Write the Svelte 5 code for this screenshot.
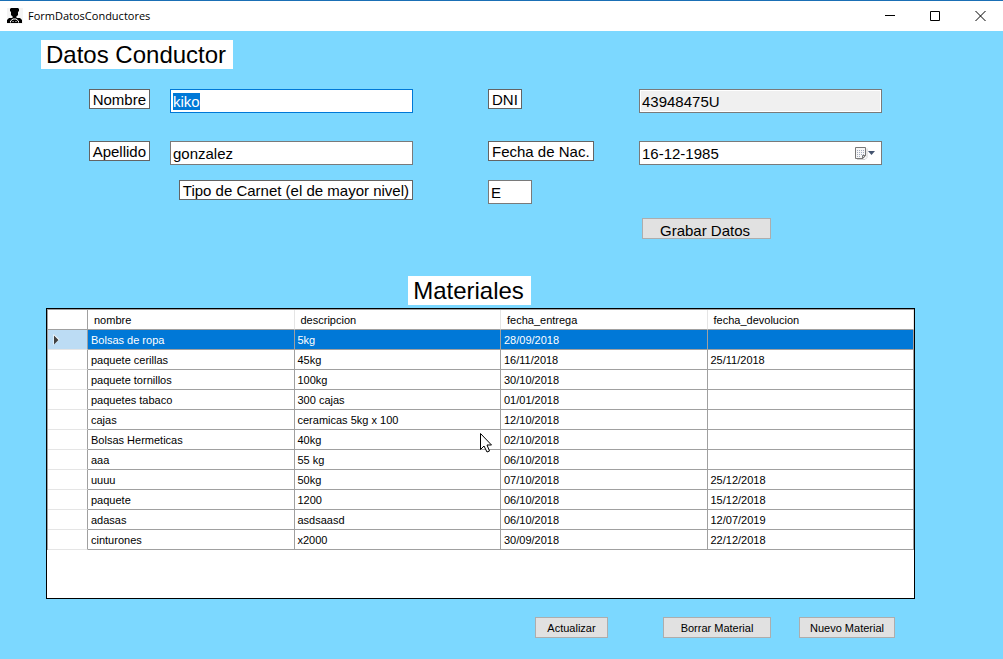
<script>
  import { onMount } from 'svelte';

  let nombreInput;

  let conductor = $state({
    nombre: 'kiko',
    apellido: 'gonzalez',
    dni: '43948475U',
    fecha: '16-12-1985',
    carnet: 'E'
  });

  const columnas = ['nombre', 'descripcion', 'fecha_entrega', 'fecha_devolucion'];

  const materiales = [
    ['Bolsas de ropa', '5kg', '28/09/2018', ''],
    ['paquete cerillas', '45kg', '16/11/2018', '25/11/2018'],
    ['paquete tornillos', '100kg', '30/10/2018', ''],
    ['paquetes tabaco', '300 cajas', '01/01/2018', ''],
    ['cajas', 'ceramicas 5kg x 100', '12/10/2018', ''],
    ['Bolsas Hermeticas', '40kg', '02/10/2018', ''],
    ['aaa', '55 kg', '06/10/2018', ''],
    ['uuuu', '50kg', '07/10/2018', '25/12/2018'],
    ['paquete', '1200', '06/10/2018', '15/12/2018'],
    ['adasas', 'asdsaasd', '06/10/2018', '12/07/2019'],
    ['cinturones', 'x2000', '30/09/2018', '22/12/2018']
  ];

  let seleccion = $state(0);

  onMount(() => {
    nombreInput.focus();
    nombreInput.select();
  });
</script>

<div class="window">
  <header class="titlebar">
    <svg class="app-icon" width="16" height="16" viewBox="0 0 16 16" aria-hidden="true">
      <rect width="16" height="16" fill="#f4f4f4" />
      <path d="M3 1l1-1h7l1 1v2l-1 1v3L9 9H6L4 7V4L3 3z" fill="#000" />
      <path d="M0 15v-3l2-2h3l1-1h3l1 1h3l2 2v3z" fill="#000" />
      <path d="M3.500 14.500v-1.500l2.500-2h3l2.500 2v1.500M5.500 13.500h1M8.500 13.500h1" fill="none" stroke="#fff" />
    </svg>
    <span class="title">FormDatosConductores</span>
    <div class="controls">
      <button type="button" aria-label="Minimizar">
        <svg width="11" height="11" viewBox="0 0 11 11"><path d="M0 4.500h10" stroke="#000" /></svg>
      </button>
      <button type="button" aria-label="Maximizar">
        <svg width="11" height="11" viewBox="0 0 11 11"><path d="M.5.5h9v9h-9z" fill="none" stroke="#000" /></svg>
      </button>
      <button type="button" aria-label="Cerrar">
        <svg width="11" height="11" viewBox="0 0 11 11"><path d="M.5 0l10 10M10.500 0l-10 10" stroke="#000" /></svg>
      </button>
    </div>
  </header>

  <main>
    <h1 class="heading">Datos Conductor</h1>

    <form class="fields" onsubmit={(e) => e.preventDefault()}>
      <label class="tag left r1" for="nombre">Nombre</label>
      <input class="box mid r1" id="nombre" bind:this={nombreInput} bind:value={conductor.nombre} />
      <label class="tag third r1" for="dni">DNI</label>
      <input class="box last r1" id="dni" readonly bind:value={conductor.dni} />

      <label class="tag left r2" for="apellido">Apellido</label>
      <input class="box mid r2" id="apellido" bind:value={conductor.apellido} />
      <label class="tag third r2" for="fecha">Fecha de Nac.</label>
      <div class="date last r2">
        <input id="fecha" bind:value={conductor.fecha} />
        <button type="button" aria-label="Abrir calendario">
          <svg width="21" height="14" viewBox="0 0 21 14">
            <path d="M2 13.500h8l2-2v-9" fill="none" stroke="#d0d0d0" />
            <path d="M.5 1.500h10v8l-2.500 3H.5z" fill="#f7f7f7" stroke="#777" />
            <path d="M2 4.500h7M2 6.500h7M2 8.500h7M2 10.500h4" stroke="#a3adc0" stroke-dasharray="1 1" />
            <path d="M7.500 12.500v-3h3z" fill="#ddd" stroke="#777" />
            <path d="M13 5h7l-3.500 4z" fill="#44546f" />
          </svg>
        </button>
      </div>

      <label class="tag wide r3" for="carnet">Tipo de Carnet (el de mayor nivel)</label>
      <input class="box third short r3" id="carnet" bind:value={conductor.carnet} />

      <button class="btn save last r4" type="submit">Grabar Datos</button>
    </form>

    <section class="materials">
      <div class="caption"><h2 class="heading" id="materiales">Materiales</h2></div>
      <div class="grid">
        <table aria-labelledby="materiales">
          <thead>
            <tr>
              <th class="rowhead"></th>
              {#each columnas as columna}
                <th>{columna}</th>
              {/each}
            </tr>
          </thead>
          <tbody>
            {#each materiales as fila, i}
              <tr class:selected={i === seleccion} onclick={() => (seleccion = i)}>
                <td class="rowhead">
                  {#if i === seleccion}
                    <svg width="8" height="13" viewBox="0 0 8 13" aria-hidden="true">
                      <path d="M1.500 1v11L7.500 6.500z" fill="#fff" />
                      <path d="M2 2.500v9L6.500 7z" fill="#404040" />
                    </svg>
                  {/if}
                </td>
                {#each fila as valor}
                  <td>{valor}</td>
                {/each}
              </tr>
            {/each}
          </tbody>
        </table>
      </div>
    </section>

    <div class="actions">
      <button class="btn refresh" type="button">Actualizar</button>
      <button class="btn remove" type="button">Borrar Material</button>
      <button class="btn add" type="button">Nuevo Material</button>
    </div>
  </main>

  <svg class="pointer" width="13" height="20" viewBox="0 0 13 20" aria-hidden="true">
    <path d="M.5.5v16l3.500-3.500 3 6 2.500-1-2.500-6h4.500z" fill="#fff" stroke="#000" />
  </svg>
</div>

<style>
  :global(body) {
    margin: 0;
    background: #7cd8ff;
  }

  .window {
    position: relative;
    box-sizing: border-box;
    min-height: 100vh;
    background: #7cd8ff;
    color: #000;
    font: 11px/14px 'Liberation Sans', Arial, sans-serif;
  }

  input,
  button {
    box-sizing: border-box;
    margin: 0;
    border-radius: 0;
    color: inherit;
    font: inherit;
  }

  .titlebar {
    display: flex;
    align-items: center;
    box-sizing: border-box;
    height: 31px;
    padding-left: 7px;
    border-top: 1px solid #1a6fb5;
    background: #fff;
  }

  .title {
    margin-left: 5px;
    font: 11px/16px 'Open Sans', 'Noto Sans', sans-serif;
  }

  .controls {
    display: flex;
    align-self: stretch;
    margin-left: auto;
  }

  .controls button {
    display: flex;
    align-items: center;
    justify-content: center;
    width: 45px;
    padding: 0;
    border: 0;
    background: none;
  }

  main {
    padding: 9px 88px 20px 41px;
  }

  .heading {
    width: max-content;
    margin: 0;
    padding: 1px 7px 0 5px;
    background: #fff;
    font-size: 24px;
    font-weight: 400;
    line-height: 28px;
  }

  .fields {
    display: grid;
    grid-template-columns: 109px 20px minmax(0, 1fr) 75px 106px 45px minmax(0, 1fr);
    grid-template-rows: 52px 39px 38px 21px;
    align-items: start;
    margin-top: 20px;
    padding-right: 33px;
    font-size: 15px;
    line-height: 18px;
  }

  .r1 { grid-row: 1; }
  .r2 { grid-row: 2; }
  .r3 { grid-row: 3; }
  .r4 { grid-row: 4; }

  .left {
    grid-column: 1;
    justify-self: end;
  }

  .mid { grid-column: 3; }

  .wide {
    grid-column: 1 / 4;
    justify-self: end;
  }

  .third {
    grid-column: 5;
    justify-self: start;
  }

  .last { grid-column: 7; }

  .tag {
    padding: 1px 3px 0;
    border: 1px solid #646464;
    background: #fff;
    line-height: 17px;
    white-space: nowrap;
  }

  .box,
  .date {
    box-sizing: border-box;
    height: 24px;
    border: 1px solid #7a7a7a;
    background: #fff;
  }

  .box {
    width: 100%;
    padding: 0 2px;
    outline: none;
  }

  .box:focus {
    border-color: #0078d7;
  }

  .box::selection {
    background: #0078d7;
    color: #fff;
  }

  .box:read-only {
    background: #f0f0f0;
    box-shadow: inset 0 0 0 1px #fff;
  }

  .box.short {
    width: 44px;
  }

  .date {
    display: flex;
  }

  .date input {
    flex: 1;
    min-width: 0;
    padding: 1px 2px 0;
    border: 0;
    outline: none;
    background: none;
  }

  .date button {
    display: flex;
    align-items: center;
    padding: 0 5px 0 0;
    border: 0;
    background: none;
  }

  .btn {
    height: 21px;
    padding: 0;
    border: 1px solid #adadad;
    background: #e1e1e1;
  }

  .save {
    width: 129px;
    margin-left: 3px;
    padding-top: 4px;
    padding-right: 3px;
    line-height: 16px;
  }

  .materials {
    margin-top: 37px;
    padding-left: 5px;
  }

  .caption {
    display: flex;
    justify-content: center;
    margin-bottom: 3px;
    padding-right: 22px;
  }

  .grid {
    box-sizing: border-box;
    min-height: 291px;
    border: 1px solid #000;
    background: #fff;
  }

  table {
    width: 100%;
    border-collapse: separate;
    border-spacing: 0;
    border-top: 1px solid #a0a0a0;
    border-left: 1px solid #a0a0a0;
    table-layout: fixed;
  }

  th,
  td {
    box-sizing: border-box;
    height: 20px;
    padding: 0 3px;
    border-right: 1px solid #a0a0a0;
    border-bottom: 1px solid #a0a0a0;
    text-align: left;
    font-weight: 400;
    white-space: nowrap;
  }

  th {
    padding: 0 6px;
    border-right-color: #e5e5e5;
  }

  .rowhead {
    width: 40px;
    padding: 0 4px;
    border-right-color: #a0a0a0;
  }

  td.rowhead {
    border-bottom-color: #e5e5e5;
  }

  .rowhead svg {
    display: block;
  }

  .selected td {
    background: #0078d7;
    color: #fff;
  }

  .selected .rowhead {
    background: #bcdcf4;
  }

  .actions {
    display: flex;
    justify-content: flex-end;
    gap: 28px;
    margin-top: 18px;
    padding-right: 20px;
  }

  .refresh {
    width: 73px;
    margin-right: 27px;
  }

  .remove { width: 108px; }
  .add { width: 96px; }

  .pointer {
    position: absolute;
    top: 433px;
    left: 480px;
    pointer-events: none;
  }
</style>
